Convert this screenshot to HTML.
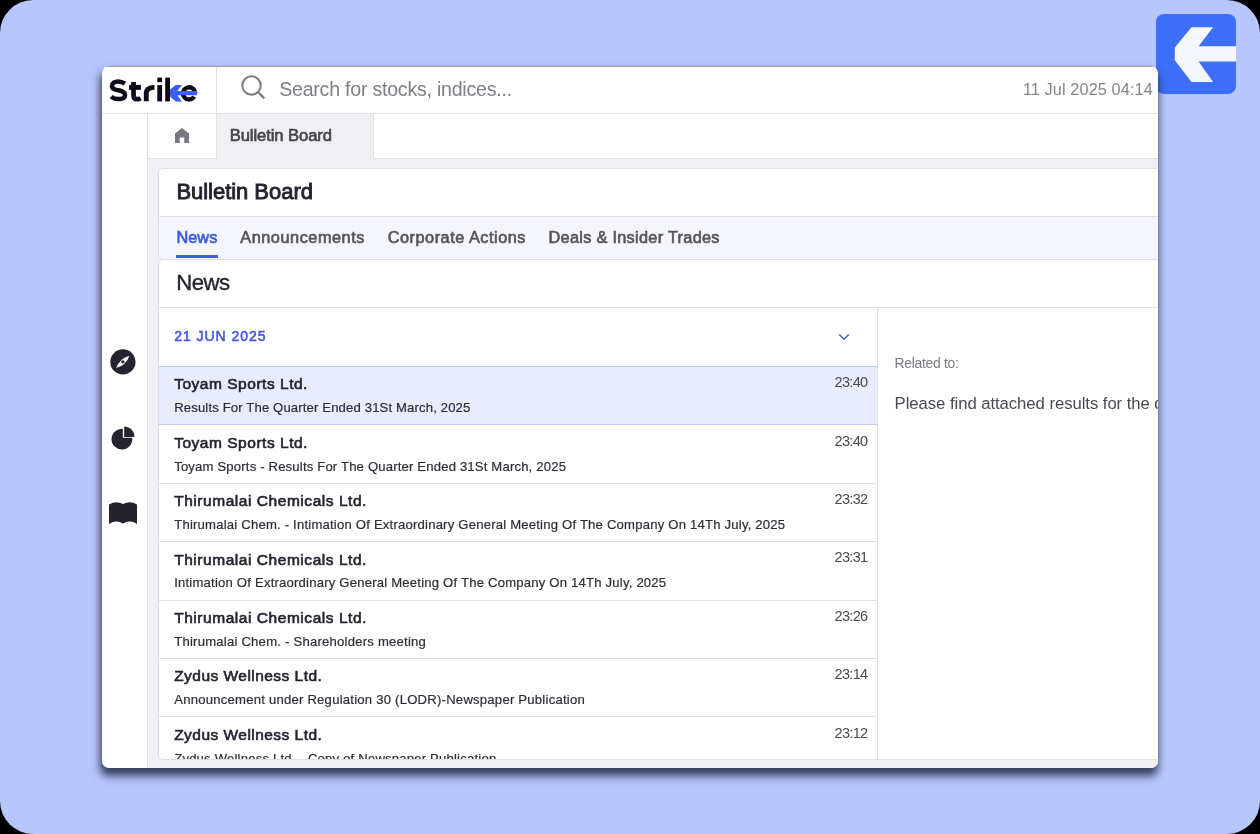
<!DOCTYPE html>
<html><head><meta charset="utf-8">
<style>
*{margin:0;padding:0;box-sizing:border-box}
html,body{width:1260px;height:834px;overflow:hidden;background:#000}
body{position:relative;font-family:"Liberation Sans",sans-serif}
.bg{position:absolute;left:0;top:0;width:1260px;height:834px;border-radius:33px;background:#b7c6fd}
.appicon{position:absolute;left:1156px;top:14px;width:80px;height:80px;border-radius:8px;background:#3e6ff8;overflow:hidden}
.win{will-change:transform;position:absolute;left:102px;top:66px;width:1056px;height:702px;border-radius:7px;background:#fff;overflow:hidden;
 box-shadow:-1px 7px 9px 1px rgba(25,29,55,.8)}
.a{position:absolute}
.t{position:absolute;line-height:1;white-space:nowrap}
</style></head><body>
<div class="bg"></div>
<div class="appicon">
 <svg width="80" height="80" viewBox="0 0 80 80" style="position:absolute;left:0;top:0">
  <polygon fill="#f5f6fc" points="35.5,13.2 57.1,13.2 42.6,32.3 80,32.3 80,47.6 42.6,47.6 57.1,67.9 35.5,67.9 18.8,46.3 18.8,33.4"/>
 </svg>
</div>
<div class="win">
<div class="a" style="left:0.00px;top:0.00px;width:1056px;height:1px;background:#9d9ca3"></div>
<div class="a" style="left:0.00px;top:47.00px;width:1056px;height:1px;background:#e0dfe5"></div>
<div class="a" style="left:114.00px;top:1.00px;width:1px;height:46px;background:#e0dfe5"></div>
<div class="a" style="left:45.00px;top:48.00px;width:1px;height:654px;background:#e0dfe5"></div>
<div class="a" style="left:46.00px;top:92.00px;width:1010px;height:610px;background:#f0eff4"></div>
<div class="a" style="left:115.00px;top:48.00px;width:156px;height:45px;background:#f0eff4"></div>
<div class="a" style="left:114.00px;top:48.00px;width:1px;height:45px;background:#e0dfe5"></div>
<div class="a" style="left:271.00px;top:48.00px;width:1px;height:45px;background:#e0dfe5"></div>
<div class="a" style="left:46.00px;top:92.00px;width:68px;height:1px;background:#e0dfe5"></div>
<div class="a" style="left:272.00px;top:92.00px;width:784px;height:1px;background:#e0dfe5"></div>
<svg class="a" style="left:0.00px;top:0.00px" width="114" height="47" viewBox="102 66 114 47">
 <g fill="none" stroke="#0d0b18" stroke-linecap="butt">
  <path d="M124.9,83.6 C122.6,82.0 120.5,81.4 118.3,81.4 C114.5,81.4 112.0,83.2 112.0,86.0 C112.0,92.4 125.0,88.2 125.0,95.2 C125.0,97.9 122.4,99.1 118.3,99.1 C115.4,99.1 113.0,98.2 111.2,96.6" stroke-width="4.5"/>
  <path d="M133.55,82 L133.55,95.5 Q133.55,99.2 136.9,99.2 Q138.9,99.2 140.6,98.2" stroke-width="4.7"/>
  <path d="M146.25,101.3 L146.25,93.5 Q146.25,87.4 154.5,87.4" stroke-width="4.9"/>
  <path d="M195.1,93.15 A6.05,6.1 0 1 0 194.2,96.6" stroke-width="4.3"/>
 </g>
 <g fill="#0d0b18">
  <rect x="129.1" y="84.9" width="11.8" height="5"/>
  <rect x="157.3" y="77.6" width="4.8" height="4.6"/>
  <rect x="157.3" y="85.1" width="4.8" height="16.3"/>
  <rect x="165.2" y="77.6" width="4.8" height="23.8"/>
 </g>
 <polygon fill="#3d5ef6" points="170,89.6 175.7,85.1 181.9,85.1 177.3,90.9 197.2,90.9 197.2,95.3 177.3,95.3 181.9,101.4 175.7,101.4 170,96.6"/>
</svg>
<svg class="a" style="left:136.00px;top:6.00px" width="28" height="28" viewBox="0 0 28 28">
 <circle cx="13.5" cy="13.5" r="9.2" fill="none" stroke="#7d7c84" stroke-width="2.1"/>
 <line x1="20.2" y1="20.2" x2="25.6" y2="25.6" stroke="#7d7c84" stroke-width="2.3" stroke-linecap="round"/>
</svg>
<div class="t" style="left:177.20px;top:14.21px;font-size:19.6px;color:#7e7d85;letter-spacing:-0.238px;">Search for stocks, indices...</div>
<div class="t" style="left:920.90px;top:15.40px;font-size:16.3px;color:#858489;letter-spacing:0.100px;">11 Jul 2025 04:14</div>
<svg class="a" style="left:73.00px;top:62.00px" width="14" height="15" viewBox="0 0 14 15"><path d="M7 0 L14 5.5 L14 15 L9.3 15 L9.3 9.6 L4.7 9.6 L4.7 15 L0 15 L0 5.5 Z" fill="#78767e"/></svg>
<div class="t" style="left:127.70px;top:61.65px;font-size:16.6px;color:#46454d;-webkit-text-stroke:0.66px #46454d;letter-spacing:-0.081px;">Bulletin Board</div>
<svg class="a" style="left:7.00px;top:282.00px" width="28" height="28" viewBox="0 0 28 28">
 <circle cx="13.9" cy="13.9" r="12.6" fill="#25232f"/>
 <path d="M20.5 7.7 Q17.04 17.3 7.2 20.0 Q10.66 10.4 20.5 7.7 Z" fill="#fff"/>
 <circle cx="13.85" cy="13.85" r="1.65" fill="#25232f"/>
</svg>
<svg class="a" style="left:7.00px;top:358.00px" width="28" height="28" viewBox="0 0 28 28">
 <path d="M13.8 4.74 L13.8 13.8 L23.22 13.8 A10.4 10.4 0 1 1 13.8 4.74 Z" fill="#25232f"/>
 <path d="M15.2 2.5 A10.4 10.4 0 0 1 25.6 12.9 L15.2 12.9 Z" fill="#25232f"/>
</svg>
<svg class="a" style="left:6.00px;top:434.00px" width="30" height="26" viewBox="0 0 30 26">
 <path d="M1 4.5 Q8 0.5 15 4 Q22 0.5 29 4.5 L29 24 Q22 19.5 15 23.5 Q8 19.5 1 24 Z" fill="#25232f"/>
</svg>
<div class="a" style="left:56px;top:102px;width:1100px;height:92px;border:1px solid #dedde3;border-radius:5px;background:#fff;overflow:hidden"><div class="a" style="left:0;top:47px;width:1100px;height:1px;background:#e2e1e7"></div><div class="a" style="left:0;top:48px;width:1100px;height:43px;background:#f5f6fd"></div><div class="a" style="left:17px;top:86px;width:42px;height:3px;background:#3b5fe0"></div></div>
<div class="t" style="left:74.40px;top:114.98px;font-size:22.0px;color:#25232f;-webkit-text-stroke:0.88px #25232f;letter-spacing:-0.035px;">Bulletin Board</div>
<div class="t" style="left:74.40px;top:163.10px;font-size:16.3px;color:#3b5ae0;-webkit-text-stroke:0.65px #3b5ae0;letter-spacing:0.083px;">News</div>
<div class="t" style="left:138.30px;top:163.10px;font-size:16.3px;color:#55545c;-webkit-text-stroke:0.65px #55545c;letter-spacing:0.533px;">Announcements</div>
<div class="t" style="left:285.70px;top:163.10px;font-size:16.3px;color:#55545c;-webkit-text-stroke:0.65px #55545c;letter-spacing:0.522px;">Corporate Actions</div>
<div class="t" style="left:446.50px;top:163.10px;font-size:16.3px;color:#55545c;-webkit-text-stroke:0.65px #55545c;letter-spacing:0.300px;">Deals &amp; Insider Trades</div>
<div class="a" style="left:56px;top:193px;width:1100px;height:501px;border:1px solid #dedde3;border-radius:5px;background:#fff;overflow:hidden"><div class="a" style="left:0;top:47px;width:1100px;height:1px;background:#e0dfe5"></div><div class="a" style="left:718px;top:48px;width:1px;height:460px;background:#e0dfe5"></div><div class="a" style="left:0;top:48px;width:718px;height:451px;overflow:hidden"><div class="t" style="left:15.30px;top:21.35px;font-size:14.0px;color:#4658dc;-webkit-text-stroke:0.56px #4658dc;letter-spacing:0.940px;">21 JUN 2025</div>
<svg class="a" style="left:679.00px;top:24.50px" width="12" height="8" viewBox="0 0 12 8"><path d="M1.2 1.5 L6 6.2 L10.8 1.5" fill="none" stroke="#4a5bd0" stroke-width="1.6"/></svg>
<div class="a" style="left:0.00px;top:58.00px;width:718px;height:58px;background:#e8ecfd"></div>
<div class="a" style="left:0.00px;top:58.00px;width:718px;height:1px;background:#b9c6f4"></div>
<div class="a" style="left:0.00px;top:116.00px;width:718px;height:1px;background:#c3c8ec"></div>
<div class="t" style="left:15.20px;top:68.48px;font-size:15.5px;color:#25232f;-webkit-text-stroke:0.62px #25232f;letter-spacing:0.519px;">Toyam Sports Ltd.</div>
<div class="t" style="left:15.20px;top:93.11px;font-size:13.1px;color:#2e2d35;letter-spacing:0.148px;-webkit-text-stroke:0.2px #2e2d35;">Results For The Quarter Ended 31St March, 2025</div>
<div class="t" style="left:675.60px;top:67.23px;font-size:14.5px;color:#4a4950;letter-spacing:-0.675px;">23:40</div>
<div class="t" style="left:15.20px;top:126.88px;font-size:15.5px;color:#25232f;-webkit-text-stroke:0.62px #25232f;letter-spacing:0.519px;">Toyam Sports Ltd.</div>
<div class="t" style="left:15.20px;top:151.51px;font-size:13.1px;color:#2e2d35;letter-spacing:0.177px;-webkit-text-stroke:0.2px #2e2d35;">Toyam Sports - Results For The Quarter Ended 31St March, 2025</div>
<div class="t" style="left:675.60px;top:125.63px;font-size:14.5px;color:#4a4950;letter-spacing:-0.675px;">23:40</div>
<div class="a" style="left:0.00px;top:175.00px;width:718px;height:1px;background:#e0dfe5"></div>
<div class="t" style="left:15.20px;top:185.28px;font-size:15.5px;color:#25232f;-webkit-text-stroke:0.62px #25232f;letter-spacing:0.544px;">Thirumalai Chemicals Ltd.</div>
<div class="t" style="left:15.20px;top:209.91px;font-size:13.1px;color:#2e2d35;letter-spacing:0.208px;-webkit-text-stroke:0.2px #2e2d35;">Thirumalai Chem. - Intimation Of Extraordinary General Meeting Of The Company On 14Th July, 2025</div>
<div class="t" style="left:675.60px;top:184.03px;font-size:14.5px;color:#4a4950;letter-spacing:-0.675px;">23:32</div>
<div class="a" style="left:0.00px;top:233.00px;width:718px;height:1px;background:#e0dfe5"></div>
<div class="t" style="left:15.20px;top:243.68px;font-size:15.5px;color:#25232f;-webkit-text-stroke:0.62px #25232f;letter-spacing:0.544px;">Thirumalai Chemicals Ltd.</div>
<div class="t" style="left:15.20px;top:268.31px;font-size:13.1px;color:#2e2d35;letter-spacing:0.207px;-webkit-text-stroke:0.2px #2e2d35;">Intimation Of Extraordinary General Meeting Of The Company On 14Th July, 2025</div>
<div class="t" style="left:675.60px;top:242.43px;font-size:14.5px;color:#4a4950;letter-spacing:-0.675px;">23:31</div>
<div class="a" style="left:0.00px;top:292.00px;width:718px;height:1px;background:#e0dfe5"></div>
<div class="t" style="left:15.20px;top:302.08px;font-size:15.5px;color:#25232f;-webkit-text-stroke:0.62px #25232f;letter-spacing:0.544px;">Thirumalai Chemicals Ltd.</div>
<div class="t" style="left:15.20px;top:326.71px;font-size:13.1px;color:#2e2d35;letter-spacing:0.226px;-webkit-text-stroke:0.2px #2e2d35;">Thirumalai Chem. - Shareholders meeting</div>
<div class="t" style="left:675.60px;top:300.83px;font-size:14.5px;color:#4a4950;letter-spacing:-0.675px;">23:26</div>
<div class="a" style="left:0.00px;top:350.00px;width:718px;height:1px;background:#e0dfe5"></div>
<div class="t" style="left:15.20px;top:360.48px;font-size:15.5px;color:#25232f;-webkit-text-stroke:0.62px #25232f;letter-spacing:0.464px;">Zydus Wellness Ltd.</div>
<div class="t" style="left:15.20px;top:385.11px;font-size:13.1px;color:#2e2d35;letter-spacing:0.231px;-webkit-text-stroke:0.2px #2e2d35;">Announcement under Regulation 30 (LODR)-Newspaper Publication</div>
<div class="t" style="left:675.60px;top:359.23px;font-size:14.5px;color:#4a4950;letter-spacing:-0.675px;">23:14</div>
<div class="a" style="left:0.00px;top:408.00px;width:718px;height:1px;background:#e0dfe5"></div>
<div class="t" style="left:15.20px;top:418.88px;font-size:15.5px;color:#25232f;-webkit-text-stroke:0.62px #25232f;letter-spacing:0.464px;">Zydus Wellness Ltd.</div>
<div class="t" style="left:15.20px;top:443.51px;font-size:13.1px;color:#2e2d35;letter-spacing:0.200px;-webkit-text-stroke:0.2px #2e2d35;">Zydus Wellness Ltd. - Copy of Newspaper Publication</div>
<div class="t" style="left:675.60px;top:417.63px;font-size:14.5px;color:#4a4950;letter-spacing:-0.675px;">23:12</div></div></div>
<div class="t" style="left:74.20px;top:205.71px;font-size:22.2px;color:#25232f;letter-spacing:-0.500px;-webkit-text-stroke:0.35px #25232f;">News</div>
<div class="t" style="left:792.60px;top:291.42px;font-size:13.8px;color:#7b7a82;letter-spacing:-0.245px;">Related to:</div>
<div class="t" style="left:792.60px;top:329.86px;font-size:16.7px;color:#4a4950;letter-spacing:-0.050px;">Please find attached results for the quarter ended 31st March, 2025</div>
</div>
</body></html>
